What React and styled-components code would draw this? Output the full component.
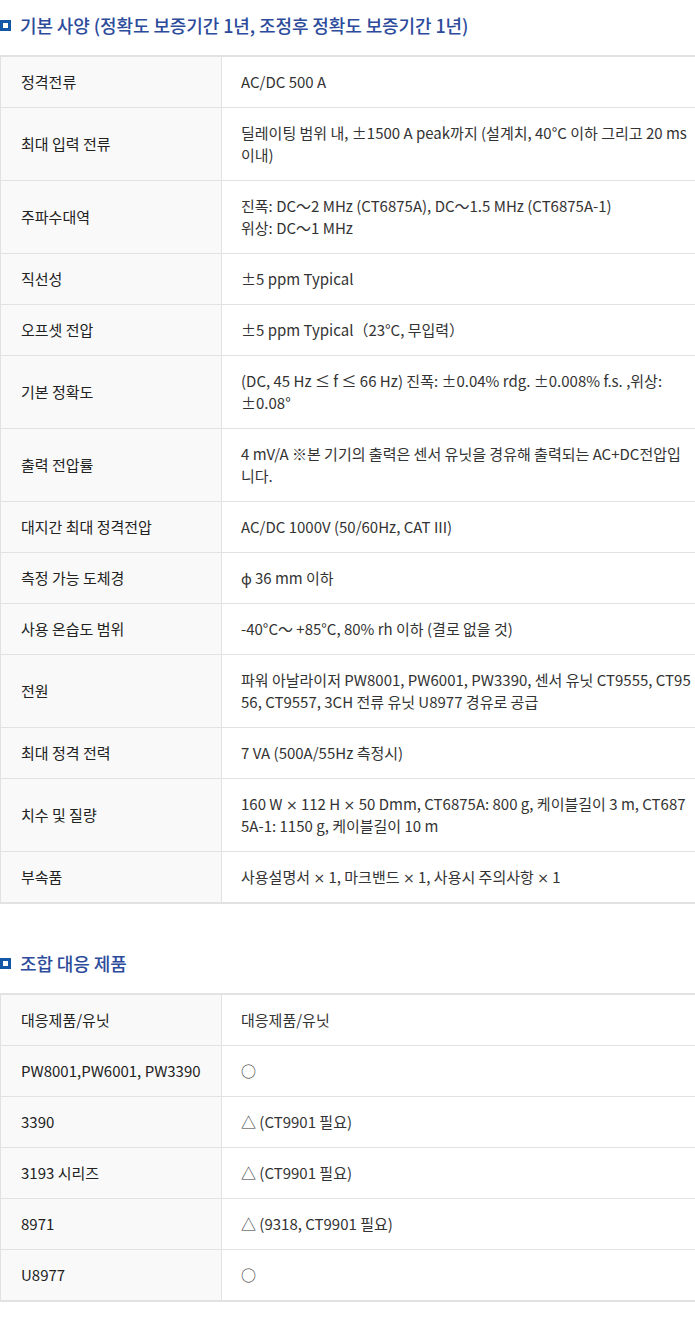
import React from 'react';
import styled, { createGlobalStyle } from 'styled-components';

const GlobalStyle = createGlobalStyle`
  body {
    margin: 0;
    background: #fff;
    font-family: "Noto Sans CJK KR", "Noto Sans", sans-serif;
    color: #222;
  }
`;

// Latin symbols (×, φ) come from a Latin face in the original
const Sym = styled.span`
  font-family: ${(p) => (p.$wide ? '"DejaVu Sans"' : '"Noto Sans"')}, sans-serif;
  font-size: ${(p) => (p.$wide ? 14 : 15)}px;
  line-height: 1;
`;

const X = () => <Sym $wide>×</Sym>;

const specs = [
  ['정격전류', 'AC/DC 500 A'],
  ['최대 입력 전류', '딜레이팅 범위 내, ±1500 A peak까지 (설계치, 40°C 이하 그리고 20 ms 이내)'],
  ['주파수대역', ['진폭: DC〜2 MHz (CT6875A), DC〜1.5 MHz (CT6875A-1)', '위상: DC〜1 MHz']],
  ['직선성', '±5 ppm Typical'],
  ['오프셋 전압', '±5 ppm Typical（23°C, 무입력）'],
  ['기본 정확도', '(DC, 45 Hz ≤ f ≤ 66 Hz) 진폭: ±0.04% rdg. ±0.008% f.s. ,위상: ±0.08°'],
  ['출력 전압률', '4 mV/A ※본 기기의 출력은 센서 유닛을 경유해 출력되는 AC+DC전압입니다.'],
  ['대지간 최대 정격전압', 'AC/DC 1000V (50/60Hz, CAT III)'],
  ['측정 가능 도체경', <><Sym>φ</Sym>{'\u200936 mm 이하'}</>],
  ['사용 온습도 범위', '-40°C〜 +85°C, 80% rh 이하 (결로 없을 것)'],
  ['전원', '파워 아날라이저 PW8001, PW6001, PW3390, 센서 유닛 CT9555, CT9556, CT9557, 3CH 전류 유닛 U8977 경유로 공급'],
  ['최대 정격 전력', '7 VA (500A/55Hz 측정시)'],
  ['치수 및 질량', <>160 W <X /> 112 H <X /> 50 Dmm, CT6875A: 800 g, 케이블길이 3 m, CT6875A-1: 1150 g, 케이블길이 10 m</>],
  ['부속품', <>사용설명서 <X /> 1, 마크밴드 <X /> 1, 사용시 주의사항 <X /> 1</>],
];

const combos = [
  ['대응제품/유닛', '대응제품/유닛'],
  ['PW8001,PW6001, PW3390', '○'],
  ['3390', '△ (CT9901 필요)'],
  ['3193 시리즈', '△ (CT9901 필요)'],
  ['8971', '△ (9318, CT9901 필요)'],
  ['U8977', '○'],
];

const Page = styled.div`
  width: 695px;
  overflow: hidden;
  padding-top: 12px;
  padding-bottom: 44px;
`;

const Section = styled.section`
  margin-bottom: ${(p) => p.$gap || 0}px;
`;

const Heading = styled.h2`
  display: flex;
  align-items: center;
  gap: 9px;
  margin: 0 0 17px;
  font-size: 18px;
  font-weight: 500;
  line-height: 26px;
  color: #2c4b9b;
  letter-spacing: -0.1px;
`;

const Mark = styled.span`
  width: 11px;
  height: 11px;
  box-sizing: border-box;
  border: 3px solid #1457a6;
  background: #fff;
  flex: none;
`;

const Table = styled.div`
  width: 720px;
  border-top: 2px solid #e2e2e2;
  border-left: 1px solid #e2e2e2;
`;

const Row = styled.div`
  display: grid;
  grid-template-columns: 221px 1fr;
  border-bottom: 1px solid #e2e2e2;
  &:last-child {
    border-bottom-width: 2px;
  }
`;

const Label = styled.div`
  display: flex;
  align-items: center;
  background: #f9f9f9;
  border-right: 1px solid #e2e2e2;
  padding: 14px 20px;
  font-size: 15px;
  line-height: 22px;
  color: #222;
`;

const Value = styled.div`
  display: flex;
  flex-direction: column;
  justify-content: center;
  padding: 14px 5px 14px 19px;
  width: 450px;
  font-size: 15px;
  line-height: 22px;
  color: #333;
  word-break: break-all;
`;

const Line = styled.span`
  display: block;
`;

function SpecTable({ rows }) {
  return (
    <Table>
      {rows.map(([label, value], i) => (
        <Row key={i}>
          <Label>{label}</Label>
          <Value>
            {Array.isArray(value)
              ? value.map((line) => <Line key={line}>{line}</Line>)
              : <Line>{value}</Line>}
          </Value>
        </Row>
      ))}
    </Table>
  );
}

export default function App() {
  return (
    <Page>
      <GlobalStyle />
      <Section $gap={46}>
        <Heading>
          <Mark />
          기본 사양 (정확도 보증기간 1년, 조정후 정확도 보증기간 1년)
        </Heading>
        <SpecTable rows={specs} />
      </Section>
      <Section>
        <Heading>
          <Mark />
          조합 대응 제품
        </Heading>
        <SpecTable rows={combos} />
      </Section>
    </Page>
  );
}
